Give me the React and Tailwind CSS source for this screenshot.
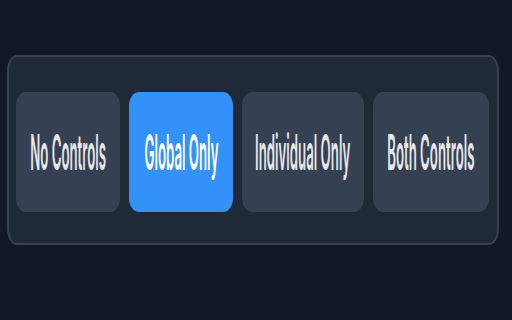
import React, { useState } from 'react';

const options = [
  { id: 'none', label: 'No Controls', w: 'w-[104px]' },
  { id: 'global', label: 'Global Only', w: 'w-[104px]' },
  { id: 'individual', label: 'Individual Only', w: 'w-[122px]' },
  { id: 'both', label: 'Both Controls', w: 'w-[116px]' },
];

export default function App() {
  const [mode, setMode] = useState('global');

  return (
    <div className="w-[512px] h-[320px] bg-[#111827] pt-[55px] pl-[7px]" style={{ fontFamily: 'Inter, "Noto Sans", sans-serif' }}>
      <div className="w-[492px] h-[190px] rounded-[10px/16px] border-2 border-[#364152] bg-[#1f2937] flex items-center gap-[9px] px-[7px] pt-[4px]">
        {options.map((opt) => {
          const active = mode === opt.id;
          return (
            <button
              key={opt.id}
              onClick={() => setMode(opt.id)}
              className={`${opt.w} h-[120px] shrink-0 flex items-center justify-center rounded-[10px/14px] ${
                active ? 'bg-[#3391f8] text-white' : 'bg-[#354053] text-[#e5e7eb]'
              }`}
            >
              <span className="inline-block whitespace-nowrap text-[50px] leading-none font-semibold scale-x-[0.265] origin-center">
                {opt.label}
              </span>
            </button>
          );
        })}
      </div>
    </div>
  );
}
